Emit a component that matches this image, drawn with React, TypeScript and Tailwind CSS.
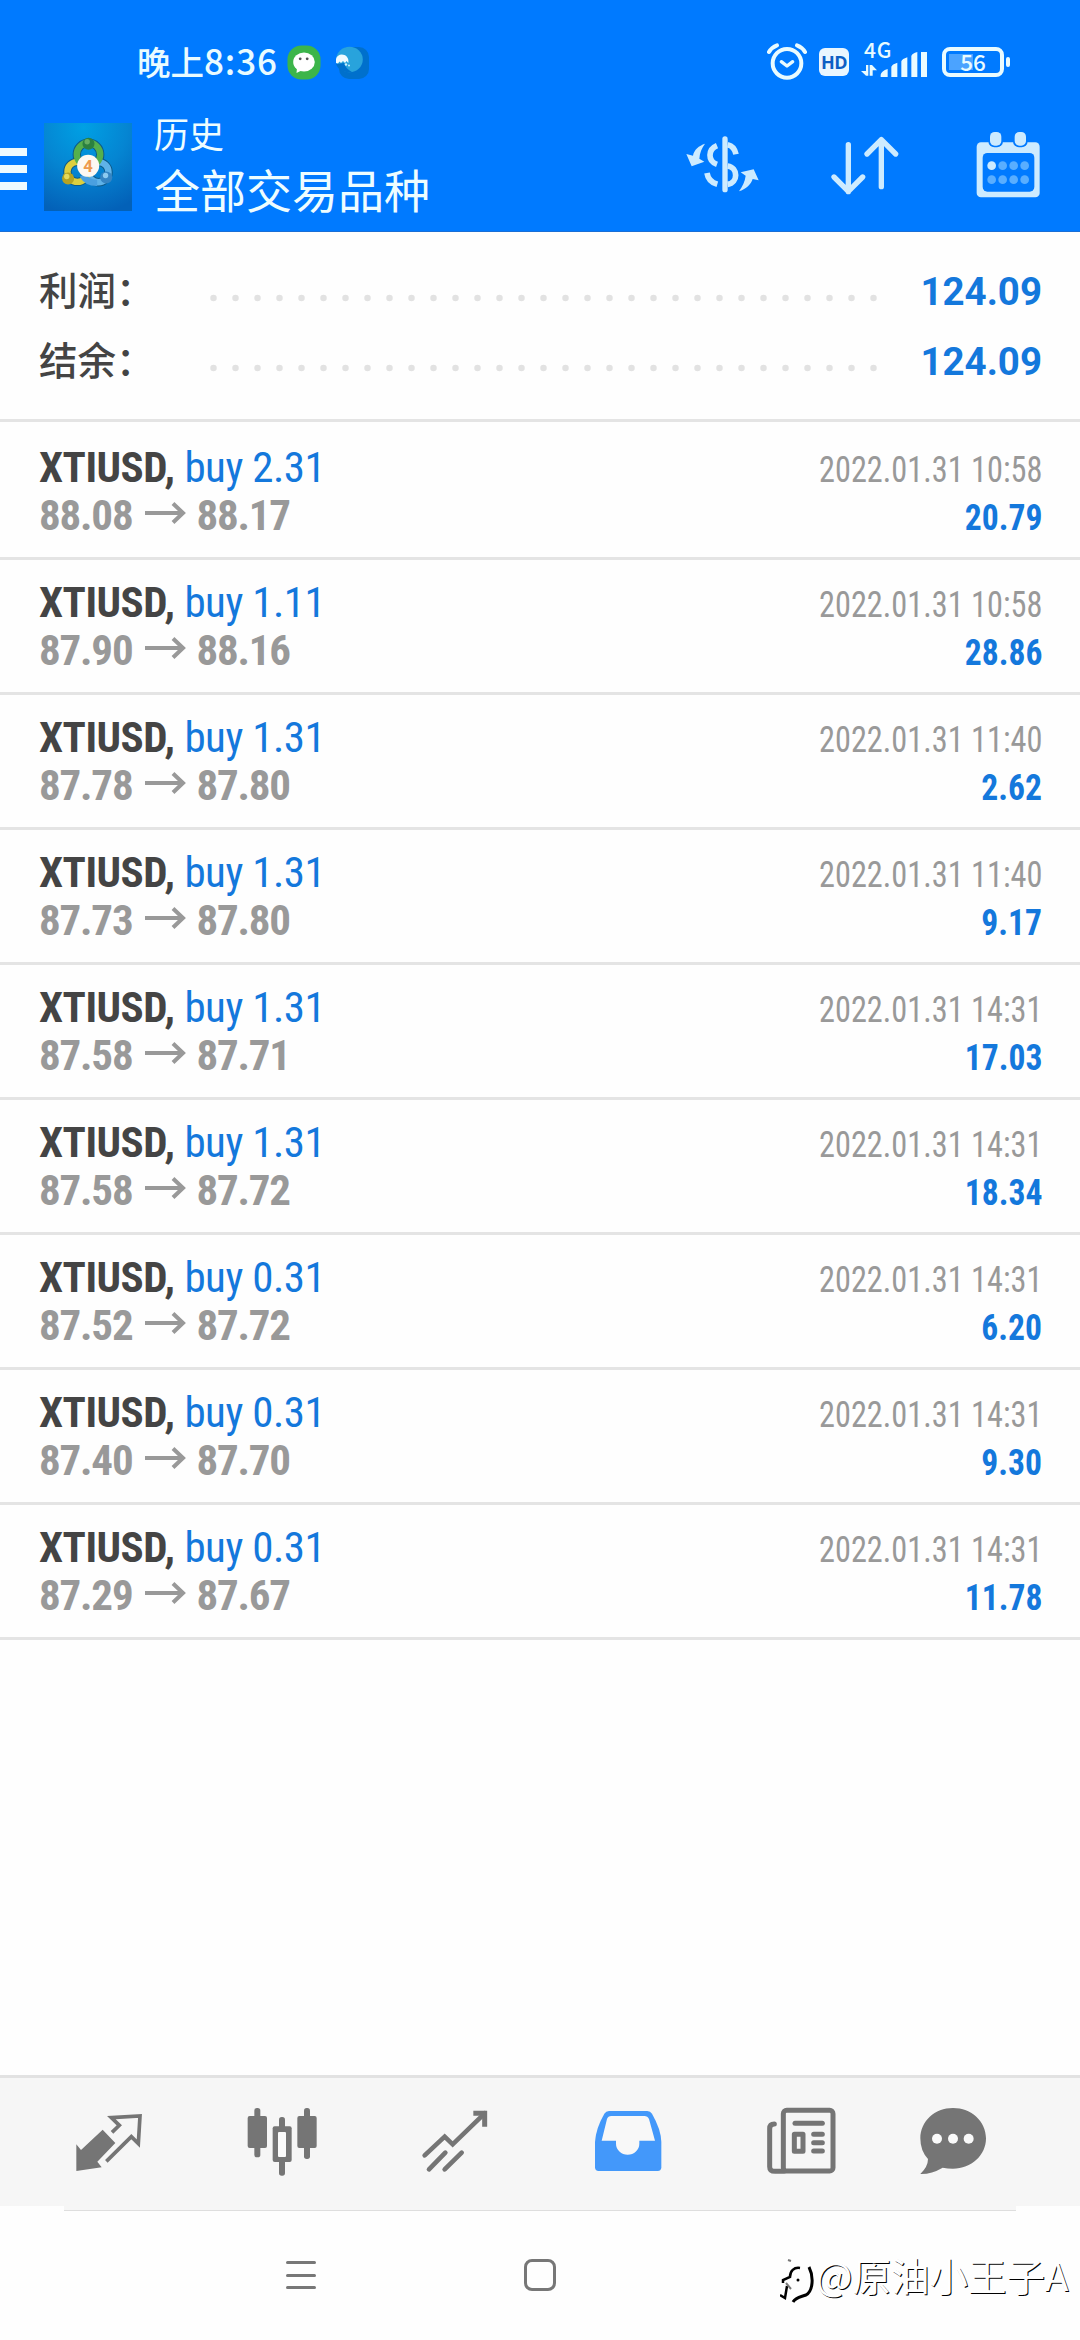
import { FC, ReactNode } from "react";

interface Deal {
  symbol: string;
  side: string;
  volume: string;
  open: string;
  close: string;
  time: string;
  profit: string;
}

const deals: Deal[] = [
  { symbol: "XTIUSD", side: "buy", volume: "2.31", open: "88.08", close: "88.17", time: "2022.01.31 10:58", profit: "20.79" },
  { symbol: "XTIUSD", side: "buy", volume: "1.11", open: "87.90", close: "88.16", time: "2022.01.31 10:58", profit: "28.86" },
  { symbol: "XTIUSD", side: "buy", volume: "1.31", open: "87.78", close: "87.80", time: "2022.01.31 11:40", profit: "2.62" },
  { symbol: "XTIUSD", side: "buy", volume: "1.31", open: "87.73", close: "87.80", time: "2022.01.31 11:40", profit: "9.17" },
  { symbol: "XTIUSD", side: "buy", volume: "1.31", open: "87.58", close: "87.71", time: "2022.01.31 14:31", profit: "17.03" },
  { symbol: "XTIUSD", side: "buy", volume: "1.31", open: "87.58", close: "87.72", time: "2022.01.31 14:31", profit: "18.34" },
  { symbol: "XTIUSD", side: "buy", volume: "0.31", open: "87.52", close: "87.72", time: "2022.01.31 14:31", profit: "6.20" },
  { symbol: "XTIUSD", side: "buy", volume: "0.31", open: "87.40", close: "87.70", time: "2022.01.31 14:31", profit: "9.30" },
  { symbol: "XTIUSD", side: "buy", volume: "0.31", open: "87.29", close: "87.67", time: "2022.01.31 14:31", profit: "11.78" },
];

const summary = [
  { label: "利润：", value: "124.09" },
  { label: "结余：", value: "124.09" },
];

function WeChatIcon() {
  return (
    <svg className="ml-[9px] w-[34px] h-[35px]" viewBox="0 0 34 35">
      <rect x="0.5" y="0.5" width="33" height="34" rx="14" fill="#3cb54a" />
      <ellipse cx="17" cy="17" rx="10.8" ry="9.6" fill="#fff" />
      <path d="M10 23l-.5 5 5-2.5z" fill="#fff" />
      <circle cx="13.2" cy="13.8" r="1.4" fill="#555" />
      <circle cx="20.2" cy="13.8" r="1.4" fill="#555" />
    </svg>
  );
}

function BirdIcon() {
  return (
    <svg className="ml-[15px] w-[34px] h-[35px]" viewBox="0 0 34 35">
      <rect x="3" y="2" width="30" height="32" rx="10" fill="#0070cc" />
      <ellipse cx="13.5" cy="14.5" rx="13.3" ry="12.8" fill="#28a3dc" />
      <path d="M0 18V14c1-4 5-5.500 8.500-4 3 1.300 4.500 4.500 3.800 8l-1.800-2-1.500 2-2-2-2 2-1.500-1.500L2 18.500z" fill="#f0fbff" />
      <path d="M0 19c4 0 6-1 8-1 1 4 4 7 8 9C8 28 2 25 0 19z" fill="#0070cc" />
      <circle cx="10" cy="19.500" r="1.200" fill="#c9efff" />
      <circle cx="13" cy="20.500" r="1" fill="#c9efff" />
    </svg>
  );
}

function StatusBar() {
  return (
    <div className="flex h-[92px] items-center pt-8 pl-[137px] pr-[70px] text-[#e9fbff]">
      <span className="text-[33.5px] leading-[40px] -mt-1 font-medium font-['Noto_Sans_CJK_SC',sans-serif]">
        晚上<span className="text-[35px] tracking-[0.9px]">8:36</span>
      </span>
      <WeChatIcon />
      <BirdIcon />
      <svg className="ml-auto w-10 h-[38px]" viewBox="46 39 120 114" fill="none" stroke="currentColor" strokeLinecap="round">
        <circle cx="106" cy="100" r="43" strokeWidth="12" />
        <path d="M89 95l17 13 17-13" strokeWidth="10" strokeLinejoin="round" />
        <path d="M52 66q8-14 24-20M160 66q-8-14-24-20" strokeWidth="12" />
      </svg>
      <span className="ml-3 w-[30px] h-7 rounded-md bg-[#e9f6ff] text-[#0c5fc4] text-[18px] leading-7 font-bold text-center tracking-[-0.5px] font-['Open_Sans',sans-serif]">
        HD
      </span>
      <div className="ml-3 w-[67px] h-[60px] -mt-1">
        <div className="ml-[3px] mt-1.5 h-[26px] text-[21px] leading-[26px] font-medium tracking-[0.8px] font-['Noto_Sans_CJK_SC',sans-serif]">
          4G
        </div>
        <svg className="-mt-2.5 w-[67px] h-[25px]" viewBox="330 69 201 75" fill="currentColor">
          <path d="M345 108h7v32h-7l-15-14h15zM356 108h7l15 16h-13v16h-9z" />
          <path d="M389 137q2-11 21-17v24h-21zM421 113q2-7 18-12v43h-18zM451 97q2-7 18-12v59h-18zM481 81q2-7 18-12v75h-18zM510 66q2-9 18-12v90h-18z" />
        </svg>
      </div>
      <div className="ml-3.5 flex items-center">
        <div className="w-[62px] h-[30px] rounded-lg border-4 border-current p-[3px]">
          <div className="w-full h-full text-center text-[22.5px] leading-[14px] font-medium font-['Noto_Sans_CJK_SC',sans-serif] bg-linear-to-r from-[#4ba3ff] from-50% to-transparent to-50%">
            56
          </div>
        </div>
        <div className="ml-0.5 w-1 h-2.5 rounded-full bg-current" />
      </div>
    </div>
  );
}

function AppLogo() {
  return (
    <svg className="w-[88px] h-[88px] mt-[31px] ml-[17px]" viewBox="43 39 263 263">
      <defs>
        <radialGradient id="logoBg" cx="45%" cy="5%" r="100%">
          <stop offset="0" stopColor="#00a0e4" />
          <stop offset="0.5" stopColor="#0585d2" />
          <stop offset="1" stopColor="#0361b8" />
        </radialGradient>
      </defs>
      <rect x="43" y="39" width="263" height="263" fill="url(#logoBg)" />
      <g fill="none" strokeWidth="19">
        <g stroke="#0d5a88" strokeWidth="25">
          <circle cx="176" cy="133" r="35" />
          <circle cx="143" cy="185" r="30" />
          <circle cx="206" cy="186" r="30" />
        </g>
        <circle cx="206" cy="186" r="30" stroke="#5fb2e8" />
        <circle cx="143" cy="185" r="30" stroke="#dccf3e" />
        <circle cx="176" cy="133" r="35" stroke="#55b04c" />
        <path d="M158 195q14 24 44 23" stroke="#4aa0e0" />
      </g>
      <circle cx="176" cy="101" r="18" fill="#2c8040" />
      <circle cx="172" cy="95" r="8" fill="#65ae62" />
      <circle cx="115" cy="205" r="18" fill="#b5a322" />
      <circle cx="111" cy="199" r="8" fill="#e5da5c" />
      <circle cx="229" cy="202" r="18" fill="#3585c4" />
      <circle cx="227" cy="196" r="8" fill="#8ccaf0" />
      <circle cx="175" cy="167" r="33" fill="#fdf8f2" />
      <text x="175" y="185" textAnchor="middle" fontSize="50" fontWeight="700" fill="#ee9a4d" className="font-['Roboto',sans-serif]">
        4
      </text>
    </svg>
  );
}

function CurrencyIcon() {
  return (
    <svg className="w-[84px] h-[110px]" viewBox="62 0 252 330" fill="none" stroke="#cdebff" strokeWidth="17">
      <path d="M194 87v152" strokeWidth="16" strokeLinecap="round" />
      <path d="M170 107c-27 11-29 46 0 56M140 189q4 26 31 34" />
      <path d="M202 104c14 3 22 13 25 29" />
      <path d="M202 168c32 5 32 50 0 55" />
      <g fill="#cdebff" stroke="none">
        <path d="M134 101c-18 6-33 18-36 36l-20-5 16 37 38-14-15-9c1-18 8-33 17-45z" />
        <path d="M236 244c20-6 36-20 41-37l18 4-15-33-39 9 15 10c-2 18-10 33-20 47z" />
      </g>
    </svg>
  );
}

function SortIcon() {
  return (
    <svg className="w-[72px] h-[110px] ml-16" viewBox="508 0 216 330" fill="none" stroke="#cdebff" strokeWidth="16" strokeLinecap="round" strokeLinejoin="round">
      <path d="M566 104v141M523 201l43 43 43-43" />
      <path d="M665 230V89M622 132l43-43 43 43" />
    </svg>
  );
}

function CalendarIcon() {
  return (
    <svg className="w-[72px] h-[110px] ml-[71px]" viewBox="937 0 216 330">
      <rect x="951" y="97" width="189" height="165" rx="13" fill="#cdebff" />
      <rect x="969" y="129" width="155" height="116" rx="14" fill="#007aff" />
      <rect x="986" y="60" width="44" height="52" rx="18" fill="#007aff" />
      <rect x="1060" y="60" width="44" height="52" rx="18" fill="#007aff" />
      <rect x="991" y="66" width="34" height="41" rx="14" fill="#cdebff" />
      <rect x="1065" y="66" width="34" height="41" rx="14" fill="#cdebff" />
      {[996, 1029, 1062, 1095].map((x) => (
        <g key={x}>
          <circle cx={x} cy="167" r="13" fill={x === 996 ? "#cdebff" : "#59aeff"} />
          <circle cx={x} cy="209" r="13" fill="#59aeff" />
        </g>
      ))}
    </svg>
  );
}

function Header() {
  return (
    <header className="h-[232px] bg-[#007aff] border-b border-[#1a6fd6]">
      <StatusBar />
      <div className="flex items-start">
        <div className="mt-14 flex flex-col gap-[9px]">
          <div className="w-[27px] h-2 bg-[#eefaff]" />
          <div className="w-[27px] h-2 bg-[#eefaff]" />
          <div className="w-[27px] h-2 bg-[#eefaff]" />
        </div>
        <AppLogo />
        <div className="mt-4 ml-[22px] text-[#eefdff] font-['Noto_Sans_CJK_SC',sans-serif]">
          <div className="text-[35px] leading-[50px]">历史</div>
          <div className="text-[46px] leading-[60px]">全部交易品种</div>
        </div>
        <div className="ml-auto mt-[18px] pr-9 flex">
          <CurrencyIcon />
          <SortIcon />
          <CalendarIcon />
        </div>
      </div>
    </header>
  );
}

const DealRow: FC<{ deal: Deal }> = ({ deal }) => (
  <li className="h-[135px] pt-[18px] pl-[39px] pr-[38px] border-b-3 border-[#e4e4e4] font-['Roboto_Condensed','Roboto',sans-serif]">
    <div className="h-12 flex items-baseline justify-between leading-[48px]">
      <div className="text-[43px]">
        <span className="font-bold tracking-[-0.5px] text-[#444]">{deal.symbol},</span>{" "}
        <span className="tracking-[-0.5px] text-[#1478dc]">
          {deal.side} {deal.volume}
        </span>
      </div>
      <div className="text-[36.5px] text-[#999] origin-right scale-x-[0.885]">{deal.time}</div>
    </div>
    <div className="h-12 flex items-baseline justify-between leading-[48px] font-bold">
      <div className="flex items-center text-[43px] tracking-[-1.2px] text-[#999]">
        {deal.open}
        <svg className="ml-[13px] mr-[9px] -mt-1 w-[42px] h-[22px]" viewBox="0 0 42 22" fill="none" stroke="currentColor" strokeWidth="4">
          <path d="M0 11h38M28 1.500l10 9.500-10 9.500" />
        </svg>
        {deal.close}
      </div>
      <div className="text-[36.5px] text-[#1478dc] origin-right scale-x-[0.92]">{deal.profit}</div>
    </div>
  </li>
);

const Tab: FC<{ viewBox: string; children: ReactNode; last?: boolean; active?: boolean }> = ({
  viewBox,
  children,
  last,
  active,
}) => (
  <button
    type="button"
    className={`flex justify-center ${last ? "w-[132px]" : "w-[173px]"} ${active ? "text-[#4398fa]" : "text-[#757575]"}`}
  >
    <svg className="w-[72px] h-[90px]" viewBox={viewBox} fill="currentColor">
      {children}
    </svg>
  </button>
);

function TabBar() {
  return (
    <nav className="h-[131px] pt-[22px] pl-[22px] flex bg-[#f6f6f6] border-t-3 border-[#e2e2e2]">
      {/* quotes */}
      <Tab viewBox="38 0 216 270">
        <path d="M127 89l38 40-54 56 13 17-76 11v-80l14 17z" />
        <path d="M155 97l22-21-24-23 86-5-5 83-21-21-75 74" fill="none" stroke="currentColor" strokeWidth="11" />
      </Tab>
      {/* chart */}
      <Tab viewBox="555 0 216 270">
        <rect x="560" y="48" width="58" height="96" rx="6" />
        <rect x="580" y="24" width="18" height="148" rx="8" />
        <rect x="709" y="48" width="58" height="96" rx="6" />
        <rect x="729" y="24" width="18" height="153" rx="8" />
        <rect x="654" y="51" width="18" height="176" rx="8" />
        <rect x="635" y="79" width="57" height="107" rx="6" />
        <rect x="651" y="96" width="24" height="75" rx="3" fill="#fafafa" />
      </Tab>
      {/* trade */}
      <Tab viewBox="1075 0 216 270">
        <g fill="none" stroke="currentColor" strokeWidth="14">
          <path d="M1092 166l60-56 24 23 96-93" strokeLinecap="round" />
          <path d="M1238 40h34v40" strokeWidth="15" />
          <path d="M1105 208l49-50M1152 208l51-50" strokeLinecap="round" />
        </g>
      </Tab>
      {/* history */}
      <Tab viewBox="35 0 216 270" active>
        <path d="M86 33h115q9 0 14 8 27 47 28 85v76q0 11-11 11H55q-11 0-11-11v-76q2-40 28-85 5-8 14-8z" />
        <path d="M93 48h99q10 0 14 9l18 65h-47v9a35 33 0 0 1-70 0v-9H64l16-65q3-9 13-9z" fill="#f8f8f8" />
      </Tab>
      {/* news */}
      <Tab viewBox="554 0 216 270">
        <g fill="none" stroke="currentColor" strokeLinecap="round">
          <rect x="609" y="31" width="149" height="182" rx="10" strokeWidth="15" />
          <path d="M582 72q-14 0-14 14v114q0 14 16 14h28" strokeWidth="15" />
          <path d="M644 70h82" strokeWidth="15" />
          <path d="M700 103h26M700 128h26M700 153h26" strokeWidth="15" />
          <rect x="642" y="103" width="26" height="51" strokeWidth="15" strokeLinejoin="round" />
        </g>
      </Tab>
      {/* messages */}
      <Tab viewBox="1011 0 216 270" last>
        <path d="M1119 24c55 0 99 40 99 91s-44 91-99 91q-16 0-31-3-34 20-67 19 23-22 23-45-23-24-23-62c0-51 43-91 98-91z" />
        <g fill="#fafafa">
          <circle cx="1071" cy="116" r="15" />
          <circle cx="1119" cy="116" r="15" />
          <circle cx="1166" cy="116" r="15" />
        </g>
      </Tab>
    </nav>
  );
}

function App() {
  return (
    <div className="relative w-[1080px] h-[2340px] flex flex-col overflow-hidden bg-[#fefefe]">
      <Header />
      <section className="pt-6 pb-[23px] pl-[39px] pr-[38px] border-b-3 border-[#e4e4e4]">
        {summary.map((item) => (
          <div key={item.label} className="h-[70px] flex items-center">
            <span className="w-[171px] -mt-1 text-[38.5px] font-medium text-[#444] font-['Noto_Sans_CJK_SC',sans-serif]">
              {item.label}
            </span>
            <svg className="mt-3.5 w-[668px] h-2" viewBox="0 0 668 8">
              <path d="M3.500 4h661" stroke="#e2e2e2" strokeWidth="6.500" strokeLinecap="round" strokeDasharray="0 22" />
            </svg>
            <span className="ml-auto mt-0.5 text-[38.5px] font-bold text-[#1478dc] font-['Roboto',sans-serif]">
              {item.value}
            </span>
          </div>
        ))}
      </section>
      <ul className="pt-[3px]">
        {deals.map((deal, i) => (
          <DealRow key={i} deal={deal} />
        ))}
      </ul>
      <div className="mt-auto">
        <TabBar />
        <div className="mx-16 h-[5px] bg-[#f6f6f6] border-b border-[#dedede]" />
        <div className="h-[129px] pl-[286px] pt-12 flex">
          <div className="mt-0.5 w-[30px] h-7 flex flex-col justify-between">
            <div className="h-[3px] rounded-full bg-[#777]" />
            <div className="h-[3px] rounded-full bg-[#777]" />
            <div className="h-[3px] rounded-full bg-[#777]" />
          </div>
          <div className="ml-[208px] w-8 h-8 rounded-lg border-3 border-[#777]" />
        </div>
      </div>
      {/* author watermark */}
      <div className="absolute left-[780px] top-[2245px] flex items-center text-white">
        <svg className="mt-2.5 w-[36px] h-[48px]" viewBox="0 0 36 48" fill="none" stroke="#000">
          <path d="M20 13c-6-1-10 3-10 9l-7 3v3M7 31L5 43l-5-3" strokeWidth="2.500" />
          <path d="M29 12c5 10 4 24-3 28-5 2-10 2-13 7" strokeWidth="3" />
          <path d="M6 28l5 6M8 5l3 1" stroke="#777" strokeWidth="2" />
          <circle cx="18" cy="25" r="1.500" fill="#000" stroke="none" />
        </svg>
        <span className="text-[38.500px] leading-[54px] whitespace-nowrap [text-shadow:1px_1px_0_#000] font-['Noto_Sans_CJK_SC',sans-serif]">
          @原油小王子A
        </span>
      </div>
    </div>
  );
}

export default App;
